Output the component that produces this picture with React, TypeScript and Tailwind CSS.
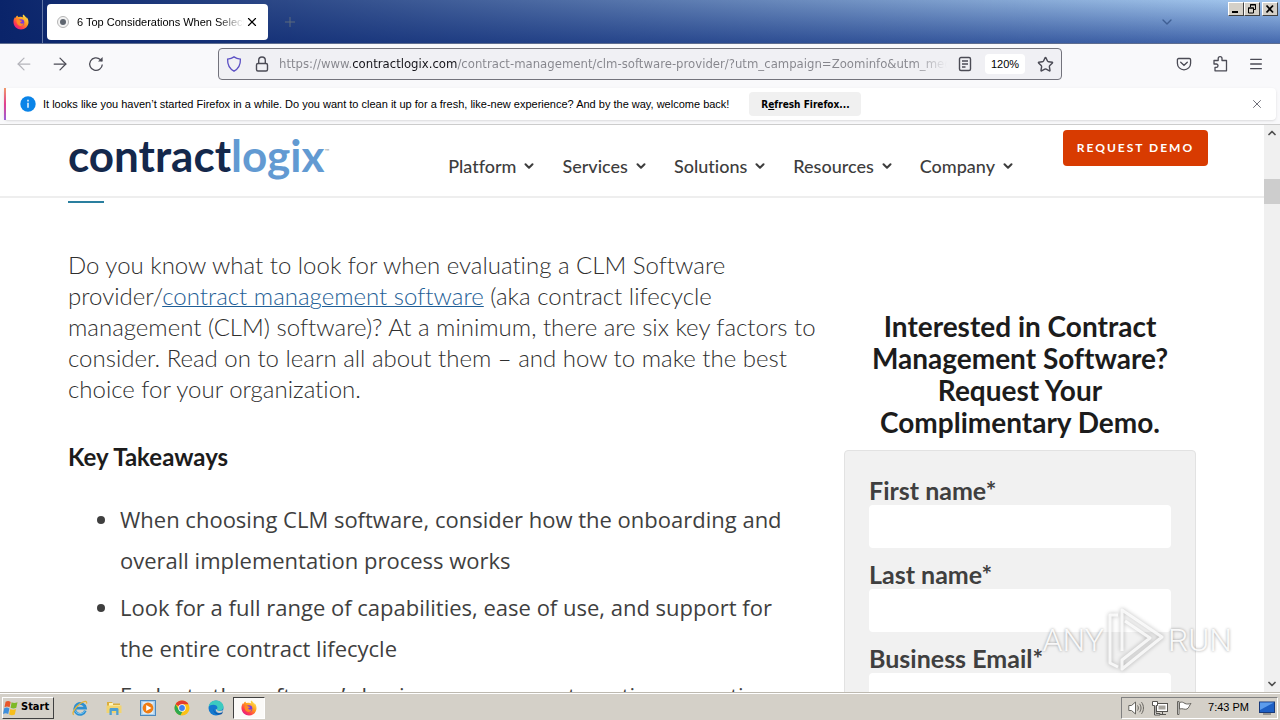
import type { ReactNode } from "react";
import { ArrowLeft, ArrowRight, ChevronDown, ChevronUp, Menu, Plus, Star, X } from "lucide-react";

const navItems = ["Platform", "Services", "Solutions", "Resources", "Company"];

const fields = [
  { id: "firstname", label: "First name", type: "text" },
  { id: "lastname", label: "Last name", type: "text" },
  { id: "email", label: "Business Email", type: "email" },
];

const pageUrl =
  "https://www.contractlogix.com/contract-management/clm-software-provider/?utm_campaign=Zoominfo&utm_medium=cpc";

/* ---------- icons ---------- */

function FirefoxIcon({ className }: { className: string }) {
  return (
    <svg viewBox="0 0 16 16" className={className} aria-hidden="true">
      <defs>
        <linearGradient id="fx-flame" x1="0.85" y1="0.1" x2="0.2" y2="0.95">
          <stop offset="0" stopColor="#ffe14a" />
          <stop offset="0.4" stopColor="#ff9a1f" />
          <stop offset="0.75" stopColor="#ff3f4b" />
          <stop offset="1" stopColor="#e4178a" />
        </linearGradient>
      </defs>
      <path
        d="M10.2 0.4c-.7 1-.6 2.1.1 3-1.200-.7-3-.9-4.300-.3C5.200 3 4.500 2.300 4.300 1.500 3.300 2.200 2.800 3 2.600 3.900c-.3-.2-.5-.6-.5-1C.9 4.400.3 6.300.5 8.500c.3 4 3.500 7 7.500 7s7.500-3.100 7.500-7.200c0-2.200-.8-4-2.100-5.200.1.500.2.900.1 1.300C12.900 2.700 11.500 1.200 10.200.4z"
        fill="url(#fx-flame)"
      />
      <circle cx="8" cy="8.600" r="3.300" fill="#7a3bdc" />
      <path d="M3.600 6c1.400-.8 2.700-.5 3.600.4 1 0 1.800.2 2 .7-.3.800-1.900.8-2 1.500.5 1.400 2.400 1.300 3.500.4-.3 2-1.800 3.100-3.500 2.900C4.800 11.600 3.200 9 3.600 6z" fill="#ff8a24" />
    </svg>
  );
}

function InfoIcon() {
  return (
    <svg viewBox="0 0 16 16" className="size-4 shrink-0" aria-hidden="true">
      <circle cx="8" cy="8" r="7.700" fill="#0a84e8" />
      <path d="M8 6.800v5M8 3.800v1.600" stroke="#fff" strokeWidth="1.400" />
    </svg>
  );
}

function ReloadIcon() {
  return (
    <svg viewBox="0 0 16 16" className="size-4" fill="none" stroke="currentColor" strokeWidth="1.300" aria-hidden="true">
      <path d="M14.300 8.500A6.300 6.300 0 1 1 12.300 3.500L14 5" />
      <path d="M14.600 1v4.600H10z" fill="currentColor" stroke="none" />
    </svg>
  );
}

function ShieldIcon() {
  return (
    <svg viewBox="0 0 16 16" className="size-4" fill="none" stroke="#5b4fc4" strokeWidth="1.300" aria-hidden="true">
      <path d="M8 .9c2 1.400 4.200 2 6.400 2.200C14.600 8.400 12.600 12.800 8 15.200 3.400 12.800 1.400 8.400 1.600 3.100 3.800 2.900 6 2.300 8 .9z" />
    </svg>
  );
}

function LockIcon() {
  return (
    <svg viewBox="0 0 16 16" className="size-4" fill="none" stroke="#4b4b55" strokeWidth="1.400" aria-hidden="true">
      <rect x="2.500" y="7.500" width="11" height="7.500" rx="1.500" />
      <path d="M4.700 7.500V4.300a3.300 3.300 0 0 1 6.600 0v3.200" />
    </svg>
  );
}

function ReaderIcon() {
  return (
    <svg viewBox="0 0 16 16" className="size-4" fill="none" stroke="#4b4b55" strokeWidth="1.400" aria-hidden="true">
      <rect x="2.500" y="1.500" width="11" height="13" rx="1.500" />
      <path d="M5 5h6M5 8h6M5 11h3.500" />
    </svg>
  );
}

function PocketIcon() {
  return (
    <svg viewBox="0 0 16 16" className="size-4" fill="none" stroke="currentColor" strokeWidth="1.300" aria-hidden="true">
      <path d="M2.700 2.500h10.600c.8 0 1.300.5 1.300 1.300v3.400a6.600 6.600 0 0 1-13.200 0V3.800c0-.8.5-1.300 1.300-1.300z" />
      <path d="M4.700 6.200L8 9.300l3.300-3.100" strokeLinecap="round" />
    </svg>
  );
}

function ExtensionsIcon() {
  return (
    <svg viewBox="0 0 16 16" className="size-4" fill="none" stroke="currentColor" strokeWidth="1.300" strokeLinejoin="round" aria-hidden="true">
      <path d="M2 4.500h4.200V2.600a1.900 1.900 0 0 1 3.800 0v1.900h4.500v10.300H3v-3.400h1.300a1.700 1.700 0 0 0 0-3.400H2z" />
    </svg>
  );
}

function WindowsFlag() {
  return (
    <svg viewBox="0 0 16 16" className="size-4" aria-hidden="true">
      <path d="M2.600 1.800C4.400.7 6 .8 7.700 1.900L6.600 7.300C5 6.300 3.300 6.200 1.500 7.200z" fill="#e8562a" />
      <path d="M8.600 2.300c1.800 1 3.600 1 5.900 0L13.300 7.700c-1.900 1-3.900 1-5.700 0z" fill="#7db928" />
      <path d="M1.200 8.300C3 7.300 4.700 7.400 6.400 8.500L5.200 14C3.600 13 1.900 12.900 0 13.900z" fill="#3f8fdc" />
      <path d="M7.300 8.900c1.800 1 3.800 1 5.700 0l-1.200 5.600c-1.900 1-3.900 1-5.700 0z" fill="#f7be1c" />
    </svg>
  );
}

function ExplorerIcon() {
  return (
    <svg viewBox="0 0 16 16" className="size-4" fill="none" aria-hidden="true">
      <path d="M13.300 10.600A5.400 5.400 0 1 1 13.500 8.200H4" stroke="#2c8fd2" strokeWidth="2.800" />
      <path d="M12.800 10.800A5.400 5.400 0 0 1 3 10.500" stroke="#7cc6ef" strokeWidth="1" />
      <path d="M1.700 14.800C-.6 13 3.600 6.600 9 3c3.500-2.300 6.300-2.300 5.500.6" stroke="#e3b23a" strokeWidth="1.300" />
    </svg>
  );
}

function FolderIcon() {
  return (
    <svg viewBox="0 0 16 16" className="size-4" aria-hidden="true">
      <path d="M1 2h5l1 1.500h7V13H1z" fill="#dcae3c" />
      <path d="M3 3h4v2h7v7H3z" fill="#fff3b8" />
      <path d="M.5 5.500h15V13H.5z" fill="#f2d46f" />
      <path d="M3.500 15V9.500c0-1 .6-1.500 1.500-1.500h6c.9 0 1.500.5 1.500 1.500V15h-2.300v-4H5.800v4z" fill="#4f9fd2" />
    </svg>
  );
}

function MediaIcon() {
  return (
    <svg viewBox="0 0 16 16" className="size-4" aria-hidden="true">
      <rect x=".5" y=".5" width="15" height="15" fill="#a9cdea" stroke="#4b88bf" />
      <rect x="2.500" y="2" width="11" height="12" fill="#dcecf8" />
      <circle cx="8" cy="8" r="5.400" fill="#f07c12" />
      <path d="M6.200 4.900L11.500 8l-5.300 3.100z" fill="#fff" />
    </svg>
  );
}

function ChromeIcon() {
  return (
    <svg viewBox="0 0 16 16" className="size-4" aria-hidden="true">
      <circle cx="8" cy="8" r="7.500" fill="#fbc116" />
      <path d="M8 8L1.500 4.250A7.500 7.500 0 0 1 14.500 4.250H8z" fill="#e33b2e" />
      <path d="M1.500 4.250L5 10l3.500 1.500-2 3.850A7.500 7.500 0 0 1 1.500 4.250z" fill="#2da94f" />
      <circle cx="8" cy="8" r="3.700" fill="#fff" />
      <circle cx="8" cy="8" r="2.900" fill="#3f80ee" />
    </svg>
  );
}

function EdgeIcon() {
  return (
    <svg viewBox="0 0 16 16" className="size-4" aria-hidden="true">
      <circle cx="8" cy="8" r="7.500" fill="#1479cf" />
      <path d="M.6 7C1 3.300 4 .5 8 .5c4.300 0 7.500 3 7.500 6.300 0 2.400-1.900 3.900-4.200 3.900-1.700 0-2.500-.6-2.500-1.200 0-.5.600-.8.600-1.900C9.400 6 7.600 4.700 5.400 4.700 3.200 4.700 1.400 5.600.6 7z" fill="#3ccbc0" />
      <path d="M5.500 8.500c0 3.500 3 5.300 5.800 5 1.200-.1 2.200-.6 3-1.200.4-.3.700.1.500.5-.4.600-.9 1.100-1.400 1.500-3.600 1-8.600-1-7.900-5.800z" fill="#0c4f9f" />
      <path d="M9 9.600c-.4 1.200 3.300 2.400 6 .4l-1 2.300c-3 1.600-6.500.2-6.300-3z" fill="#d4d0c8" />
    </svg>
  );
}

function SpeakerIcon() {
  return (
    <svg viewBox="0 0 16 16" className="size-4" fill="#fff" stroke="#66645f" aria-hidden="true">
      <path d="M.8 5.500h2.700L7.500 2v12l-4-3.500H.8z" />
      <path d="M9.500 5.500c1.100 1.500 1.100 3.500 0 5M11.500 3.800c2 2.500 2 5.900 0 8.400M13.500 2.200c2.600 3.400 2.600 8.200 0 11.600" fill="none" />
    </svg>
  );
}

function NetworkIcon() {
  return (
    <svg viewBox="0 0 16 16" className="size-4" fill="#fff" stroke="#55534f" aria-hidden="true">
      <rect x="4.500" y="3.500" width="11" height="8" />
      <rect x="6.500" y="5.500" width="7" height="4" fill="#a7a49d" stroke="none" />
      <path d="M7 14.500h7M10.500 12v2" />
      <path d="M.5 1.500h5v4H4v8h4v1.500H2.500V5.500h-2z" />
    </svg>
  );
}

function FlagIcon() {
  return (
    <svg viewBox="0 0 16 16" className="size-4" fill="#fff" stroke="#66645f" aria-hidden="true">
      <path d="M1.500 1.500h1.500v13H1.500z" />
      <path d="M3.500 2.500c2.500-1 4 0 5.500 1 2 .8 3.500.6 6 0-1.500 1.500-2 4.500-4 5.500-2.500 1-4-1-7.500 0z" />
    </svg>
  );
}

function DesktopIcon() {
  return (
    <svg viewBox="0 0 16 16" className="size-4" aria-hidden="true">
      <rect x=".5" y="2" width="15" height="10.500" fill="#1d5fc4" stroke="#17397a" />
      <path d="M1 2.500h14L1 10z" fill="#5c9cec" />
      <path d="M4 14h8" stroke="#555" />
    </svg>
  );
}

/* ---------- browser chrome ---------- */

function CaptionButton({ label, children }: { label: string; children: ReactNode }) {
  return (
    <button
      aria-label={label}
      className="flex h-3.5 w-4 items-center justify-center border border-t-white border-l-white border-r-[#404040] border-b-[#404040] bg-[#d4d0c8] text-black"
    >
      {children}
    </button>
  );
}

function TitleBar() {
  return (
    <div className="flex h-11 shrink-0 border-b border-[#5e6d8f] bg-[linear-gradient(90deg,#0a246a_0%,#0a246a00_100%),linear-gradient(180deg,#a6caf0_0%,#4468ad_100%)]">
      <div className="flex w-[43px] items-center justify-center border-r border-[#6277a6]">
        <FirefoxIcon className="size-4" />
      </div>
      <div className="my-1 ml-1 flex h-9 w-[221px] items-center rounded bg-white px-2">
        <svg viewBox="0 0 16 16" className="size-4 shrink-0" aria-hidden="true">
          <circle cx="8" cy="8" r="5.500" fill="#f3f3f3" stroke="#b5b5b5" />
          <circle cx="8" cy="8" r="3" fill="#5f6670" />
        </svg>
        <span className="ml-1.5 flex-1 overflow-hidden bg-[linear-gradient(90deg,#000_84%,transparent_100%)] bg-clip-text text-[11px] whitespace-nowrap text-transparent">
          6 Top Considerations When Selecting
        </span>
        <button aria-label="Close tab" className="flex size-4 items-center justify-center">
          <X size={14} strokeWidth={2} />
        </button>
      </div>
      <button aria-label="New tab" className="ml-1 flex w-9 items-center justify-center text-[#5d6a7d]">
        <Plus size={16} strokeWidth={1.5} />
      </button>
      <div className="ml-auto flex items-center">
        <button aria-label="List all tabs" className="mr-[53px] text-[#3f5f93]">
          <ChevronDown size={16} strokeWidth={2} />
        </button>
        <div className="mr-0.5 flex self-start pt-0.5">
          <CaptionButton label="Minimize">
            <svg viewBox="0 0 12 10" className="h-2.5 w-3"><path d="M2 7h6v2H2z" /></svg>
          </CaptionButton>
          <CaptionButton label="Restore">
            <svg viewBox="0 0 12 10" className="h-2.5 w-3" fill="none" stroke="currentColor">
              <path d="M4.500 3V.500h5v5H8M4 1h6M2.500 4h5v5h-5zM2 4h6" />
            </svg>
          </CaptionButton>
          <div className="ml-0.5">
            <CaptionButton label="Close">
              <svg viewBox="0 0 12 10" className="h-2.5 w-3" stroke="currentColor" strokeWidth="1.800"><path d="M2.500 1.500l6.500 7M9 1.500l-6.500 7" /></svg>
            </CaptionButton>
          </div>
        </div>
      </div>
    </div>
  );
}

function ToolButton({ label, className, children }: { label: string; className?: string; children: ReactNode }) {
  return (
    <button aria-label={label} className={`flex w-9 items-center justify-center ${className ?? "text-[#4b4b55]"}`}>
      {children}
    </button>
  );
}

function Toolbar() {
  return (
    <div className="flex h-11 shrink-0 bg-[#f9f9fb] px-1.5 pt-1 pb-2">
      <ToolButton label="Back" className="text-[#b4b4ba]"><ArrowLeft size={20} strokeWidth={1.5} /></ToolButton>
      <ToolButton label="Forward"><ArrowRight size={20} strokeWidth={1.5} /></ToolButton>
      <ToolButton label="Reload"><ReloadIcon /></ToolButton>
      <div className="mx-[104px] flex min-w-0 flex-1 items-center rounded border border-[#73737c] bg-[#f0f0f4] px-[7px]">
        <ShieldIcon />
        <span className="ml-3"><LockIcon /></span>
        <input
          aria-label="Address"
          defaultValue={pageUrl}
          className="ml-[9px] min-w-0 flex-1 bg-[linear-gradient(90deg,#85858c_74px,#15141a_74px,#15141a_178px,#85858c_178px,#85858c_95%,transparent_100%)] bg-clip-text font-['DejaVu_Sans_Condensed',sans-serif] text-[13px] text-transparent outline-none"
        />
        <button aria-label="Reader view" className="ml-2.5"><ReaderIcon /></button>
        <button className="ml-3 h-5 w-10 rounded bg-white text-[11px] text-black">120%</button>
        <button aria-label="Bookmark" className="ml-3 text-[#4b4b55]"><Star size={17} strokeWidth={2} /></button>
      </div>
      <ToolButton label="Save to Pocket"><PocketIcon /></ToolButton>
      <ToolButton label="Extensions"><ExtensionsIcon /></ToolButton>
      <ToolButton label="Menu"><Menu size={16} strokeWidth={2} /></ToolButton>
    </div>
  );
}

function Notification() {
  return (
    <div className="shrink-0 border-b border-[#cccccc] bg-[#f9f9fb] px-1 pb-1">
      <div className="flex h-8 items-center rounded-sm bg-white shadow-sm">
        <div className="h-full w-0.5 bg-[linear-gradient(180deg,#f09a6a,#e23f8f,#9a5fd8)]" />
        <div className="ml-3.5"><InfoIcon /></div>
        <p className="ml-[7px] text-[11px] whitespace-nowrap text-black">
          It looks like you haven’t started Firefox in a while. Do you want to clean it up for a fresh, like-new experience? And by the way, welcome back!
        </p>
        <button className="ml-5 h-6 w-28 shrink-0 rounded bg-[#f0f0f0] font-['DejaVu_Sans_Condensed',sans-serif] text-[10px] font-bold text-black">
          R<span className="underline">e</span>fresh Firefox...
        </button>
        <button aria-label="Dismiss" className="mr-3 ml-auto text-[#5b5b66]">
          <X size={14} strokeWidth={1.5} />
        </button>
      </div>
    </div>
  );
}

/* ---------- site ---------- */

function SiteHeader() {
  return (
    <header className="flex h-[73px] shrink-0 items-start border-b-2 border-[#eeeeee] bg-white pr-14 pl-[68px]">
      <a href="#" className="mt-0.5 flex text-[44px] leading-[56px] font-bold text-[#14284b]">
        contract<span className="text-[#629ad2]">logix</span>
        <sup className="top-0 mt-5 text-[6px] leading-2 font-normal text-[#999999]">™</sup>
      </a>
      <nav className="mt-[27px] ml-auto flex gap-[26px] text-[18px] leading-7 font-medium text-[#3d3d3d]">
        {navItems.map((item) => (
          <a key={item} href="#" className="flex items-center gap-1.5">
            {item}
            <ChevronDown size={14} strokeWidth={3.5} />
          </a>
        ))}
      </nav>
      <button className="mt-[5px] ml-12 h-9 w-[145px] rounded bg-[#d83b01] text-xs font-bold tracking-[2px] text-white">
        REQUEST DEMO
      </button>
    </header>
  );
}

function Article() {
  return (
    <article className="text-[#3f3f3f]">
      <div className="mt-[3px] h-0.5 w-9 bg-[#2a7f9f]" />
      <p className="mt-[46px] text-[24px] leading-[31px] font-light whitespace-nowrap text-[#2f2f2f]">
        Do you know what to look for when evaluating a CLM Software
        <br />
        provider/<a href="#" className="text-[#1f5f97] underline decoration-1">contract management software</a> (aka contract lifecycle
        <br />
        management (CLM) software)? At a minimum, there are six key factors to
        <br />
        consider. Read on to learn all about them – and how to make the best
        <br />
        choice for your organization.
      </p>
      <h3 className="mt-[37px] text-[24px] leading-8 font-bold text-[#1c1c1c]">Key Takeaways</h3>
      <ul className="mt-[26px] flex list-disc flex-col gap-1.5 pr-5 pl-[52px] font-['Open_Sans',sans-serif] text-[22px] leading-[41px]">
        <li>When choosing CLM software, consider how the onboarding and overall implementation process works</li>
        <li>Look for a full range of capabilities, ease of use, and support for the entire contract lifecycle</li>
        <li>Evaluate the software’s business process automation, reporting, and integration features</li>
      </ul>
    </article>
  );
}

function DemoForm() {
  return (
    <aside className="pt-28">
      <h2 className="text-center text-[28px] leading-8 font-bold text-[#1c1c1c]">
        Interested in Contract
        <br />
        Management Software?
        <br />
        Request Your
        <br />
        Complimentary Demo.
      </h2>
      <form className="mt-3 flex flex-col gap-[11px] rounded border border-[#e2e2e2] bg-[#f1f1f1] px-6 pt-6 pb-10">
        {fields.map((field) => (
          <div key={field.id}>
            <label htmlFor={field.id} className="block text-[25px] leading-[30px] font-bold text-[#3f3f3f]">
              {field.label}*
            </label>
            <input id={field.id} type={field.type} className="block h-[43px] w-full rounded-sm bg-white px-3 text-lg" />
          </div>
        ))}
      </form>
    </aside>
  );
}

function ScrollBar() {
  return (
    <div className="flex w-4 shrink-0 flex-col items-center bg-[#f0f0f0] text-[#505050]">
      <ChevronUp size={12} strokeWidth={3.5} className="mt-0.5" />
      <div className="mt-10 h-[25px] w-full bg-[#cdcdcd]" />
      <ChevronDown size={12} strokeWidth={3.5} className="mt-auto mb-0.5" />
    </div>
  );
}

function Watermark() {
  return (
    <div className="pointer-events-none absolute right-12 bottom-5 flex items-center gap-1 font-[Roboto,sans-serif] text-[32px] leading-[64px] font-light text-white/90 [text-shadow:0_0_3px_rgba(0,0,0,0.4)]">
      <span>ANY</span>
      <svg viewBox="0 0 56 64" className="h-16 w-14 drop-shadow-[0_0_2px_rgba(0,0,0,0.35)]" fill="none" stroke="#fff" strokeOpacity="0.8" strokeWidth="3" strokeLinejoin="round" aria-hidden="true">
        <path d="M10 7H2v48l8 4M14 43V2l40 27-40 32V52l28-22-25-17" />
      </svg>
      <span>RUN</span>
    </div>
  );
}

/* ---------- taskbar ---------- */

function Taskbar() {
  return (
    <div className="flex h-7 shrink-0 items-center border-t border-[#bdb9b0] bg-[#d4d0c8] px-0.5 pt-0.5 shadow-[inset_0_1px_0_#ffffff]">
      <button className="flex h-[22px] w-[52px] items-center border border-t-white border-l-white border-r-[#404040] border-b-[#404040] font-['DejaVu_Sans_Condensed',sans-serif] text-[11px] font-bold text-black">
        <WindowsFlag />
        <span className="ml-0.5">Start</span>
      </button>
      <div className="ml-[9px] flex items-center">
        <button aria-label="Internet Explorer" className="flex w-[34px] justify-center"><ExplorerIcon /></button>
        <button aria-label="File Explorer" className="flex w-[34px] justify-center"><FolderIcon /></button>
        <button aria-label="Media Player" className="flex w-[34px] justify-center"><MediaIcon /></button>
        <button aria-label="Chrome" className="flex w-[34px] justify-center"><ChromeIcon /></button>
        <button aria-label="Edge" className="flex w-[34px] justify-center"><EdgeIcon /></button>
        <button
          aria-label="Firefox"
          className="flex h-[22px] w-8 items-center justify-center border border-t-[#404040] border-l-[#404040] border-r-white border-b-white bg-[#fbfaf8]"
        >
          <FirefoxIcon className="size-4" />
        </button>
      </div>
      <div className="ml-auto flex h-[22px] items-center border border-t-[#808080] border-l-[#808080] border-r-white border-b-white pr-0.5 pl-1.5">
        <SpeakerIcon />
        <span className="ml-2"><NetworkIcon /></span>
        <span className="ml-2"><FlagIcon /></span>
        <span className="mr-2.5 ml-4 text-[11px] whitespace-nowrap text-black">7:43 PM</span>
        <DesktopIcon />
      </div>
    </div>
  );
}

export default function App() {
  return (
    <div className="flex h-screen flex-col overflow-hidden bg-white font-['Liberation_Sans',sans-serif]">
      <TitleBar />
      <Toolbar />
      <Notification />
      <div className="relative flex min-h-0 flex-1">
        <div className="flex min-w-0 flex-1 flex-col overflow-hidden font-[Lato,sans-serif] [font-variant-ligatures:none]">
          <SiteHeader />
          <main className="grid min-h-0 flex-1 grid-cols-[minmax(0,1fr)_352px] gap-8 overflow-hidden px-[68px]">
            <Article />
            <DemoForm />
          </main>
        </div>
        <ScrollBar />
        <Watermark />
      </div>
      <Taskbar />
    </div>
  );
}
